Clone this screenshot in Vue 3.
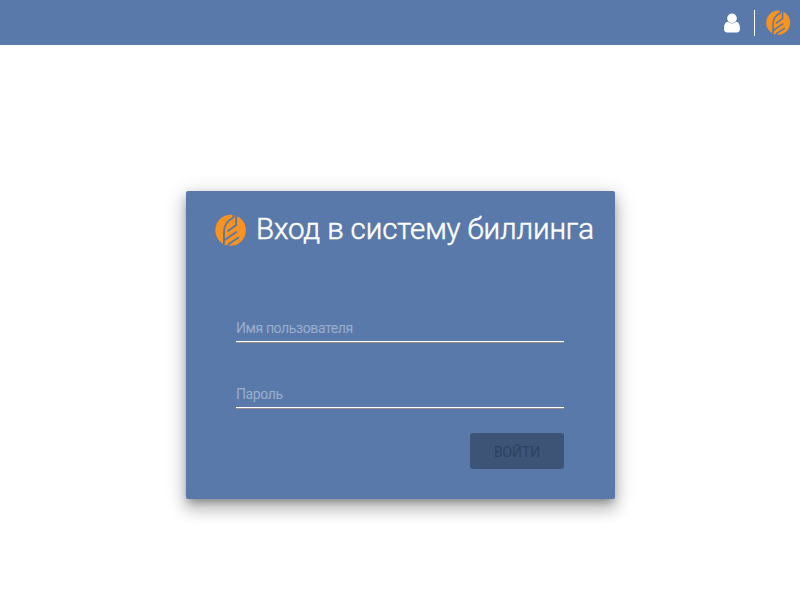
<script setup>
import { ref } from 'vue'

const username = ref('')
const password = ref('')
</script>

<template>
  <div class="page">
    <svg class="defs" width="0" height="0" aria-hidden="true">
      <symbol id="logo" viewBox="0 0 32 32">
        <ellipse cx="15.6" cy="16.3" rx="15.3" ry="15.5" fill="#f7931e" />
        <g fill="none" stroke="#5979aa" stroke-width="1.9">
          <path d="M9 30V18C9 11 12.5 6.5 18.5 3.5V0" />
          <path d="M21.2 0V11L12.6 17.2" />
          <path d="M9 29.2V26.5L22 17.5" />
          <path d="M12.2 32.3L14.5 29.5L24 23.2" />
        </g>
      </symbol>
    </svg>
    <header class="topbar">
      <svg class="user" viewBox="0 0 16 20">
        <circle cx="8" cy="5.3" r="4.8" fill="#fff" />
        <path d="M4 8.7C1 8.7 0 12 0 16c0 2.2 1.3 3.5 3.2 3.5h9.6c1.9 0 3.2-1.3 3.2-3.5 0-4-1-7.3-4-7.3-2.3 2.3-5.7 2.3-8 0Z" fill="#fff" />
      </svg>
      <span class="divider"></span>
      <svg class="small-logo"><use href="#logo" /></svg>
    </header>
    <main>
      <form class="card" @submit.prevent>
        <div class="heading">
          <svg class="logo"><use href="#logo" /></svg>
          <h1>Вход в систему биллинга</h1>
        </div>
        <div class="fields">
          <input v-model="username" class="username" type="text" placeholder="Имя пользователя" />
          <input v-model="password" class="password" type="password" placeholder="Пароль" />
          <button disabled>ВОЙТИ</button>
        </div>
      </form>
    </main>
  </div>
</template>

<style>
body { margin: 0; background: #fff; }
</style>

<style scoped>
.page { height: 600px; display: flex; flex-direction: column; overflow: hidden; font-family: Roboto, "Noto Sans", sans-serif; }
.defs { display: none; }
.topbar { height: 45px; box-sizing: border-box; flex: none; display: flex; align-items: center; justify-content: flex-end; padding-right: 9px; background: #5979aa; }
.user { width: 16px; height: 20px; margin: 1px 14.5px 0 0; }
.divider { width: 1px; height: 26px; background: #fff; margin: 1px 11px 0 0; }
.small-logo { width: 25px; height: 25px; }
main { flex: 1; display: flex; justify-content: center; align-items: flex-start; padding: 146px 0 0 1px; }
.card { width: 429px; height: 308px; box-sizing: border-box; border-radius: 2px; background: #5979aa; box-shadow: 0 6px 7px -4px rgba(0,0,0,.2), 0 11px 15px 1px rgba(0,0,0,.16), 0 4px 20px 3px rgba(0,0,0,.14), 0 3px 8px rgba(0,0,0,.12); }
.heading { display: flex; padding: 23px 0 0 29px; height: 102px; box-sizing: border-box; }
.logo { width: 32px; height: 32px; margin-right: 9px; }
h1 { margin: -5px 0 0; font-size: 29.5px; line-height: 40px; font-weight: 300; color: #fff; white-space: nowrap; letter-spacing: -.12px; -webkit-text-stroke: .5px #fff; }
.fields { display: flex; flex-direction: column; padding: 23px 51px 0 50px; }
input { width: 100%; box-sizing: border-box; height: 26px; padding: 0 0 1px; border: 0; border-bottom: 1px solid #fff; border-radius: 0; outline: 0; background: transparent; box-shadow: 0 1px #948f87; color: #fff; font: 14px Roboto, "Noto Sans", sans-serif; letter-spacing: -.4px; }
input::placeholder { color: #9bafcd; opacity: 1; }
.password { margin-top: 40px; }
button { align-self: flex-end; width: 94px; height: 36px; margin-top: 25px; padding: 2px 0 0; border: 0; border-radius: 3px; background: #3e5477; color: #2d4260; font: 14px Roboto, "Noto Sans", sans-serif; letter-spacing: -.1px; }
</style>
